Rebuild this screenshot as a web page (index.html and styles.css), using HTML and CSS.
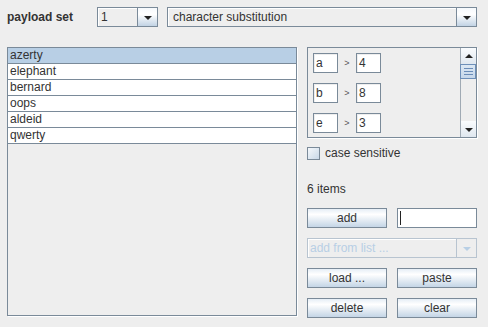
FILE: index.html
```html
<!DOCTYPE html>
<html>
<head>
<meta charset="utf-8">
<link rel="stylesheet" href="styles.css">
</head>
<body>
<div class="top">
  <div class="label">payload set</div>
  <div class="combo small"><div class="value">1</div><div class="arrow"><span class="tri"></span></div></div>
  <div class="combo big"><div class="value">character substitution</div><div class="arrow"><span class="tri"></span></div></div>
</div>
<div class="main">
  <div class="list">
    <div class="row sel">azerty</div>
    <div class="row">elephant</div>
    <div class="row">bernard</div>
    <div class="row">oops</div>
    <div class="row">aldeid</div>
    <div class="row">qwerty</div>
  </div>
  <div class="side">
    <div class="mapbox">
      <div class="maps">
        <div class="map"><div class="field">a</div><span class="gt">&gt;</span><div class="field">4</div></div>
        <div class="map"><div class="field">b</div><span class="gt">&gt;</span><div class="field">8</div></div>
        <div class="map"><div class="field">e</div><span class="gt">&gt;</span><div class="field">3</div></div>
      </div>
      <div class="scroll">
        <div class="sbtn"><span class="tri up"></span></div>
        <div class="track"><div class="thumb"><i></i><i></i><i></i></div></div>
        <div class="sbtn"><span class="tri"></span></div>
      </div>
    </div>
    <div class="check"><span class="box"></span>case sensitive</div>
    <div class="count">6 items</div>
    <div class="pair"><div class="btn">add</div><div class="input"><span class="caret"></span></div></div>
    <div class="combo dis"><div class="value">add from list ...</div><div class="arrow"><span class="tri"></span></div></div>
    <div class="pair"><div class="btn">load ...</div><div class="btn">paste</div></div>
    <div class="pair"><div class="btn">delete</div><div class="btn">clear</div></div>
  </div>
</div>
</body>
</html>
```
FILE: styles.css
```css
* { box-sizing: border-box; }
body {
  margin: 0;
  width: 488px;
  height: 327px;
  background: #eeeeee;
  font-family: "Liberation Sans", Arial, sans-serif;
  font-size: 12px;
  color: #333333;
  overflow: hidden;
}
.top {
  display: flex;
  align-items: center;
  padding: 7px 0 0 7px;
  height: 27px;
}
.label {
  width: 90px;
  font-weight: bold;
  color: #333;
}
.combo {
  display: flex;
  height: 20px;
  border: 1px solid #7a8a99;
  background: #eeeeee;
}
.combo .value {
  flex: 1;
  padding-left: 5px;
  line-height: 18px;
  box-shadow: inset 1px 1px 0 #fff;
  white-space: nowrap;
  overflow: hidden;
}
.combo .arrow {
  width: 20px;
  border-left: 1px solid #7a8a99;
  background: linear-gradient(#f6f9fc, #ffffff 35%, #c2d3e4);
  display: flex;
  align-items: center;
  justify-content: center;
}
.tri {
  width: 0; height: 0;
  border-left: 4px solid transparent;
  border-right: 4px solid transparent;
  border-top: 4px solid #222;
  margin-top: 1px;
}
.tri.up {
  border-top: 0;
  border-bottom: 4px solid #222;
  margin-top: -1px;
}
.combo.small { width: 61px; margin-right: 9px; }
.combo.small .value { padding-left: 3px; }
.combo.big { width: 310px; }
.combo.dis { border-color: #b8c4d0; margin-bottom: 10px; }
.combo.dis .value { color: #b8cfe5; padding-left: 2px; }
.combo.dis .arrow { background: #eeeeee; border-left-color: #b8c4d0; }
.combo.dis .tri { border-top-color: #b8cfe5; }

.main {
  display: flex;
  padding: 20px 0 0 7px;
}
.list {
  width: 290px;
  height: 269px;
  border: 1px solid #7a8a99;
  box-shadow: 1px 1px 0 #fff;
  margin-right: 10px;
}
.row {
  height: 16px;
  line-height: 15px;
  padding-left: 2px;
  background: #fff;
  border-bottom: 1px solid #7a8a99;
}
.row.sel { background: #b8cfe5; }
.side {
  width: 170px;
  display: flex;
  flex-direction: column;
}
.mapbox {
  height: 91px;
  border: 1px solid #7a8a99;
  box-shadow: 1px 1px 0 #fff;
  display: flex;
}
.maps {
  flex: 1;
  padding: 5px 0 0 5px;
  display: flex;
  flex-direction: column;
  gap: 10px;
}
.map {
  display: flex;
  align-items: center;
  height: 20px;
}
.field {
  width: 25px;
  height: 20px;
  border: 1px solid #7a8a99;
  background: #fff;
  box-shadow: inset 1px 1px 0 #eee;
  line-height: 18px;
  padding-left: 2px;
}
.gt {
  width: 18px;
  text-align: center;
  font-size: 9px;
  color: #555;
}
.scroll {
  width: 16px;
  border-left: 1px solid #a0aab4;
  display: flex;
  flex-direction: column;
  background: #eeeeee;
}
.sbtn {
  height: 16px;
  display: flex;
  align-items: center;
  justify-content: center;
  background: linear-gradient(#fafcfe, #dfe7ef);
}
.track { flex: 1; position: relative; }
.thumb {
  height: 15px;
  margin-left: -1px;
  border: 1px solid #6d8fb9;
  background: linear-gradient(#dbe7f3, #c6d7ea);
  display: flex;
  flex-direction: column;
  justify-content: center;
  align-items: center;
  gap: 2px;
}
.thumb i {
  display: block;
  width: 9px;
  height: 1px;
  background: #6a8cb8;
}
.check {
  display: flex;
  align-items: center;
  margin-top: 8px;
  height: 14px;
}
.box {
  width: 13px;
  height: 13px;
  border: 1px solid #7a8a99;
  background: linear-gradient(135deg, #f5f8fb, #c8d8e8);
  margin-right: 5px;
}
.count {
  margin-top: 22px;
  height: 14px;
  margin-bottom: 12px;
}
.pair {
  display: flex;
  justify-content: space-between;
  margin-bottom: 10px;
}
.btn {
  width: 80px;
  height: 20px;
  border: 1px solid #7a8a99;
  background: linear-gradient(#e6eef6, #ffffff 30%, #c4d5e6);
  text-align: center;
  line-height: 18px;
}
.input {
  width: 80px;
  height: 20px;
  border: 1px solid #7a8a99;
  background: #fff;
  padding: 2px 0 0 2px;
}
.caret {
  display: block;
  width: 1px;
  height: 14px;
  background: #222;
}
```
